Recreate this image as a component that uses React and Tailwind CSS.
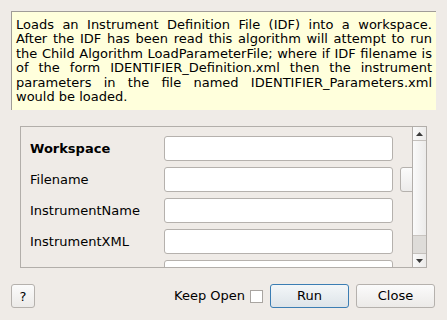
import React from 'react'

const descLines = [
  'Loads an Instrument Definition File (IDF) into a workspace.',
  'After the IDF has been read this algorithm will attempt to run',
  'the Child Algorithm LoadParameterFile; where if IDF filename is',
  'of the form IDENTIFIER_Definition.xml then the instrument',
  'parameters in the file named IDENTIFIER_Parameters.xml',
]

const props = [
  { name: 'Workspace', bold: true },
  { name: 'Filename', browse: true },
  { name: 'InstrumentName' },
  { name: 'InstrumentXML' },
  { name: 'RewriteSpectraMap' },
]

const App = () => {
  return (
    <div className="w-[447px] h-[320px] bg-[#efebe7] pt-[11px] text-[13px] text-black font-['DejaVu_Sans',sans-serif] overflow-hidden">
      {/* Description */}
      <div className="ml-[11px] w-[425px] h-[99px] bg-[#ffffdc] border-t border-l border-t-[#a09c98] border-l-[#a09c98] pl-[4px] pr-[4px] pt-[6px] leading-[14.4px]">
        {descLines.map((line) => (
          <div key={line} className="text-justify [text-align-last:justify] whitespace-nowrap">
            {line}
          </div>
        ))}
        <div>would be loaded.</div>
      </div>

      {/* Property frame */}
      <div className="mt-[16px] ml-[20px] w-[407px] h-[142px] border border-[#b2aeaa] flex">
        <div className="flex-1 overflow-hidden pl-[9px] pt-[9px] flex flex-col gap-[6px]">
          {props.map((p) => (
            <div key={p.name} className="flex items-center h-[25px] shrink-0">
              <div className={`w-[134px] shrink-0 ${p.bold ? 'font-bold' : ''}`}>{p.name}</div>
              <div className="w-[229px] h-[25px] shrink-0 rounded-[3px] border border-[#b5b1ad] bg-white" />
              {p.browse && (
                <div className="ml-[7px] w-[40px] h-[25px] shrink-0 rounded-[3px] border border-[#b5b1ad] bg-gradient-to-b from-[#fbfbfb] to-[#ecebea]" />
              )}
            </div>
          ))}
        </div>

        {/* Scrollbar */}
        <div className="w-[14px] border-l border-[#b2aeaa] flex flex-col bg-gradient-to-r from-[#fafafa] to-[#ecebea]">
          <div className="h-[14px] border-b border-[#c4c0bc] flex items-center justify-center">
            <svg width="7" height="4" viewBox="0 0 7 4"><path d="M0 4 L3.5 0 L7 4 Z" fill="#3a3a3a" /></svg>
          </div>
          <div className="flex-1" />
          <div className="h-[18px] bg-[#dedcd9] border-t border-[#c8c4c0]" />
          <div className="h-[14px] border-t border-[#c4c0bc] flex items-center justify-center">
            <svg width="7" height="4" viewBox="0 0 7 4"><path d="M0 0 L7 0 L3.5 4 Z" fill="#3a3a3a" /></svg>
          </div>
        </div>
      </div>

      {/* Bottom buttons */}
      <div className="mt-[16px] h-[24px] pl-[11px] pr-[12px] flex items-center">
        <button className="w-[24px] h-[24px] rounded-[3px] border border-[#b5b1ad] bg-gradient-to-b from-[#fbfbfb] to-[#eceae8] text-[13px] leading-none">
          ?
        </button>
        <div className="flex-1" />
        <span>Keep Open</span>
        <div className="ml-[5px] w-[13px] h-[13px] border border-[#a9a5a1] bg-white" />
        <button className="ml-[7px] w-[79px] h-[24px] rounded-[3px] border border-[#3b7db3] bg-gradient-to-b from-[#f3f6f8] to-[#dde4e9]">
          Run
        </button>
        <button className="ml-[7px] w-[79px] h-[24px] rounded-[3px] border border-[#b5b1ad] bg-gradient-to-b from-[#fbfbfb] to-[#eceae8]">
          Close
        </button>
      </div>
    </div>
  )
}

export default App
